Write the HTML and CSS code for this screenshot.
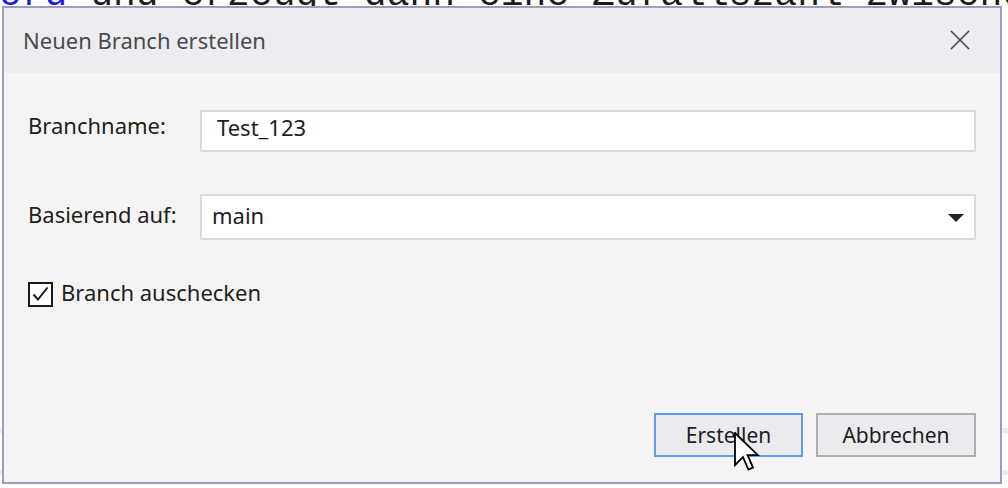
FILE: index.html
```html
<!DOCTYPE html>
<html lang="de">
<head>
<meta charset="utf-8">
<title>Neuen Branch erstellen</title>
<link rel="stylesheet" href="styles.css">
</head>
<body>
<div class="code"><div class="line"><span class="kw">ord</span> und erzeugt dann eine Zufallszahl zwischen</div></div>

<div class="dialog">
  <div class="titlebar">
    <span class="title">Neuen Branch erstellen</span>
    <svg class="close" width="20" height="20" viewBox="0 0 20 20" aria-hidden="true">
      <path d="M1 1 L19 19 M19 1 L1 19" stroke="#474747" stroke-width="1.6" fill="none"/>
    </svg>
  </div>
  <div class="body">
    <div class="row row-name">
      <label class="label">Branchname:</label>
      <div class="field input">Test_123</div>
    </div>
    <div class="row row-base">
      <label class="label">Basierend auf:</label>
      <div class="field select">
        <span>main</span>
        <svg class="arrow" width="16" height="10" viewBox="0 0 16 10" aria-hidden="true">
          <path d="M0 0 H16 L8 8 Z" fill="#222"/>
        </svg>
      </div>
    </div>
    <div class="check-row">
      <span class="checkbox">
        <svg width="21" height="21" viewBox="0 0 21 21" aria-hidden="true">
          <path d="M3.5 10.5 L8 15.5 L17.5 3.5" stroke="#1b1b1b" stroke-width="2" fill="none"/>
        </svg>
      </span>
      <span class="check-label">Branch auschecken</span>
    </div>
    <div class="footer">
      <button class="btn primary">Erstellen</button>
      <button class="btn">Abbrechen</button>
    </div>
  </div>
</div>

<svg class="cursor" width="26" height="40" viewBox="0 0 13 20" aria-hidden="true">
  <path d="M0.5 0.5 L0.5 16.5 L4.5 12.5 L7.2 18.8 L9.5 17.8 L6.8 11.6 L12 11.6 Z" fill="#fff" stroke="#000" stroke-width="0.9" stroke-linejoin="miter"/>
</svg>
</body>
</html>
```

FILE: styles.css
```css
html, body {
  margin: 0;
  padding: 0;
  width: 1008px;
  height: 488px;
  overflow: hidden;
}

body {
  background:
    linear-gradient(#ebebf0, #ebebf0) 0 428px / 100% 5px no-repeat,
    linear-gradient(#ebebf0, #ebebf0) 0 470px / 100% 5px no-repeat,
    #ffffff;
}

.code {
  position: relative;
  top: -30px;
  font-family: "Liberation Mono", "DejaVu Sans Mono", monospace;
  font-size: 38px;
  line-height: 50px;
  color: #1c1c1c;
  margin-left: -1px;
}

.line {
  white-space: pre;
}

.kw {
  color: #1a1ae6;
}

.dialog {
  position: absolute;
  left: 2px;
  top: 6px;
  width: 1000px;
  height: 478px;
  box-sizing: border-box;
  border: 2px solid #9e9eb8;
  background: #f4f4f4;
  display: flex;
  flex-direction: column;
  font-family: "Noto Sans", "Open Sans", sans-serif;
  font-size: 22px;
  line-height: 30px;
}

.titlebar {
  height: 65px;
  background: #ededf1;
  display: flex;
  align-items: center;
  justify-content: space-between;
  padding: 0 30px 0 19px;
  flex-shrink: 0;
}

.title {
  color: #4a4a4a;
  margin-top: -1px;
}

.close {
  display: block;
  margin-top: -1px;
}

.body {
  flex: 1;
  display: flex;
  flex-direction: column;
  padding: 37px 24px 25px 24px;
}

.row {
  display: flex;
  align-items: flex-start;
}

.label {
  width: 172px;
  color: #1e1e1e;
  flex-shrink: 0;
}

.field {
  flex: 1;
  box-sizing: border-box;
  background: #ffffff;
  border: 2px solid #d7dae1;
  color: #1e1e1e;
  display: flex;
  align-items: flex-start;
}

.input {
  height: 42px;
  padding-left: 15px;
}

.row-base {
  margin-top: 42px;
}

.row-base .label {
  padding-top: 5px;
}

.select {
  height: 46px;
  padding: 4px 10px 0 10px;
  justify-content: space-between;
}

.arrow {
  display: block;
  margin-top: 14px;
}

.check-row {
  margin-top: 37px;
  display: flex;
  align-items: flex-start;
  gap: 8px;
}

.checkbox {
  width: 25px;
  height: 25px;
  margin-top: 5px;
  box-sizing: border-box;
  border: 2px solid #1b1b1b;
  background: #ffffff;
  display: flex;
  align-items: center;
  justify-content: center;
}

.checkbox svg {
  display: block;
}

.check-label {
  color: #1e1e1e;
}

.footer {
  margin-top: auto;
  display: flex;
  justify-content: flex-end;
  gap: 13px;
}

.btn {
  height: 44px;
  box-sizing: border-box;
  background: #ebebef;
  border: 2px solid #adadad;
  font-family: "Noto Sans", "Open Sans", sans-serif;
  font-size: 21px;
  color: #1e1e1e;
  padding: 0;
  width: 160px;
}

.btn.primary {
  border-color: #5c9fe8;
  width: 149px;
}

.cursor {
  position: absolute;
  left: 734px;
  top: 432px;
}
```
